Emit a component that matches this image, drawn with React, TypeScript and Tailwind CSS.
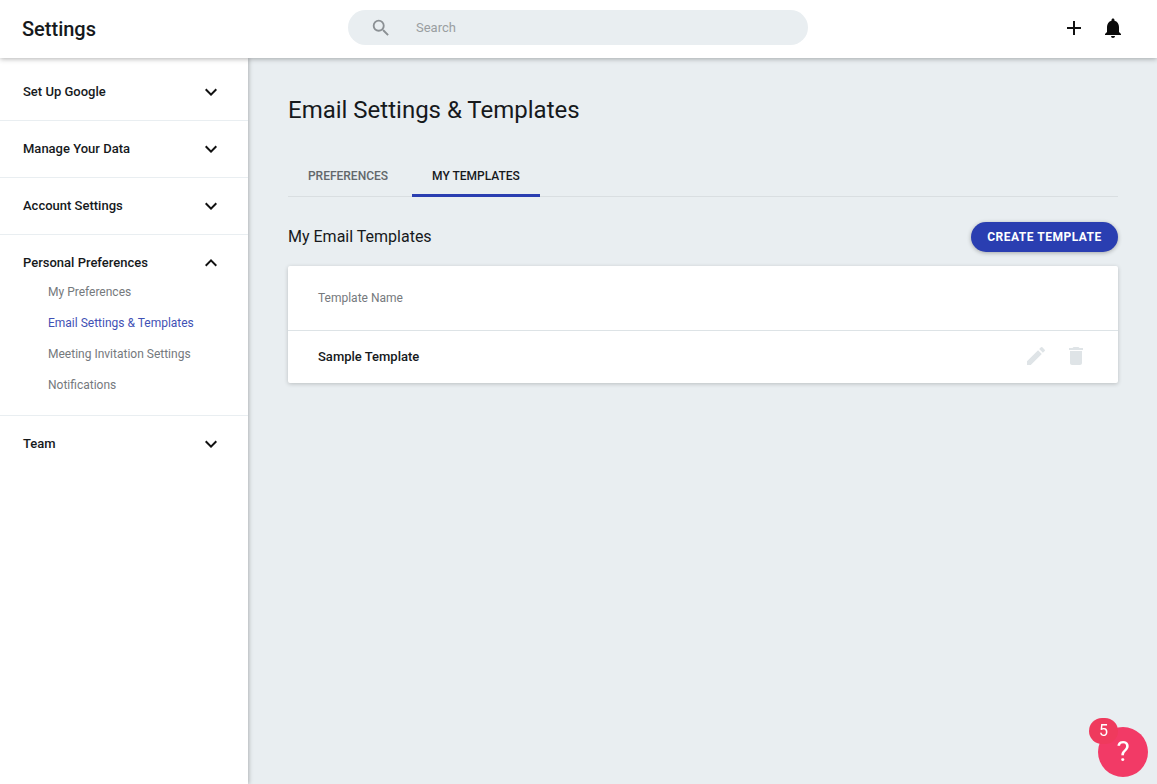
import React from "react";
import { MdAdd, MdDelete, MdEdit, MdKeyboardArrowDown, MdKeyboardArrowUp, MdNotifications, MdSearch } from "react-icons/md";

const subItems = [
  { label: "My Preferences", active: false },
  { label: "Email Settings & Templates", active: true },
  { label: "Meeting Invitation Settings", active: false },
  { label: "Notifications", active: false },
];

function NavRow({ label, open }: { label: string; open?: boolean }) {
  return (
    <div className="h-[56px] pl-[23px] pr-[25px] flex items-center justify-between">
      <span className="text-[13px] font-medium text-[#16191c]">{label}</span>
      {open ? (
        <MdKeyboardArrowUp className="w-6 h-6 text-[#111]" />
      ) : (
        <MdKeyboardArrowDown className="w-6 h-6 text-[#111]" />
      )}
    </div>
  );
}

export default function App() {
  return (
    <div className="h-screen flex flex-col overflow-hidden bg-[#e9eef1] font-['Roboto',sans-serif]">
      {/* Top bar */}
      <header className="relative z-20 h-[58px] shrink-0 bg-white flex items-center shadow-[0_1px_5px_rgba(0,0,0,0.3)]">
        <div className="w-[348px] pl-[22px] text-[20px] font-medium text-[#16191c]">Settings</div>
        <div className="w-[460px] h-[35px] mb-[3px] rounded-full bg-[#e9eef1] flex items-center pl-[22px]">
          <MdSearch className="w-[22px] h-[22px] text-[#8b9094]" />
          <span className="ml-[24px] text-[13px] text-[#9a9ea1]">Search</span>
        </div>
        <div className="flex-1 flex justify-end items-center pr-[32px] pb-[2px] gap-[15px]">
          <MdAdd className="w-6 h-6 text-[#111]" />
          <MdNotifications className="w-6 h-6 text-[#0b0b0b]" />
        </div>
      </header>

      <div className="flex-1 flex min-h-0">
        {/* Sidebar */}
        <aside className="relative z-10 w-[248px] shrink-0 bg-white pt-[6px] shadow-[1px_0_4px_rgba(0,0,0,0.25)]">
          <div className="border-b border-[#e9eef1] h-[57px]">
            <NavRow label="Set Up Google" />
          </div>
          <div className="border-b border-[#e9eef1] h-[57px]">
            <NavRow label="Manage Your Data" />
          </div>
          <div className="border-b border-[#e9eef1] h-[57px]">
            <NavRow label="Account Settings" />
          </div>
          <div className="border-b border-[#e9eef1] h-[181px]">
            <NavRow label="Personal Preferences" open />
            <ul className="-mt-[15px] flex flex-col">
              {subItems.map((item) => (
                <li
                  key={item.label}
                  className={`h-[31px] pl-[48px] flex items-center text-[12px] ${
                    item.active ? "text-[#3f51b5]" : "text-[#75797d]"
                  }`}
                >
                  {item.label}
                </li>
              ))}
            </ul>
          </div>
          <NavRow label="Team" />
        </aside>

        {/* Main content */}
        <main className="flex-1 pl-[40px] pr-[39px] pt-[36px]">
          <h1 className="text-[24px] leading-[32px] text-[#16191c]">Email Settings &amp; Templates</h1>

          <div className="mt-[26px] h-[45px] flex gap-[4px] border-b border-[#d9dee1]">
            <div className="h-[45px] w-[120px] flex items-center justify-center pt-[3px] text-[12px] font-medium text-[#62676b]">
              PREFERENCES
            </div>
            <div className="h-[45px] w-[128px] flex items-center justify-center pt-[6px] text-[12px] font-medium text-[#16191c] border-b-[3px] border-[#2a3eb1]">
              MY TEMPLATES
            </div>
          </div>

          <div className="mt-[25px] flex items-center justify-between">
            <h2 className="text-[16px] text-[#16191c]">My Email Templates</h2>
            <button className="w-[147px] h-[30px] rounded-full bg-[#2a3eb1] text-white text-[12px] font-bold tracking-[0.5px] shadow-[0_1px_4px_rgba(0,0,0,0.3)]">
              CREATE TEMPLATE
            </button>
          </div>

          <div className="mt-[14px] bg-white rounded-[2px] shadow-[0_1px_4px_rgba(0,0,0,0.2)]">
            <div className="h-[65px] pl-[30px] flex items-center border-b border-[#dde3e6] text-[12px] text-[#75797d]">
              Template Name
            </div>
            <div className="h-[52px] pl-[30px] pr-[30px] flex items-center justify-between">
              <span className="text-[13px] font-medium text-[#16191c]">Sample Template</span>
              <div className="flex items-center gap-[16px] pb-[2px]">
                <MdEdit className="w-6 h-6 text-[#dfe4e7]" />
                <MdDelete className="w-6 h-6 text-[#dfe4e7]" />
              </div>
            </div>
          </div>
        </main>
      </div>

      {/* Help button */}
      <div className="fixed z-30 right-[9px] bottom-[7px] w-[50px] h-[50px] rounded-full bg-[#f23a66] flex items-center justify-center text-white text-[28px] font-normal">
        ?
        <span className="absolute left-[-9px] top-[-9px] w-[29px] h-[26px] rounded-full bg-[#ef3a5d] flex items-center justify-center text-[16px] font-normal">
          5
        </span>
      </div>
    </div>
  );
}
